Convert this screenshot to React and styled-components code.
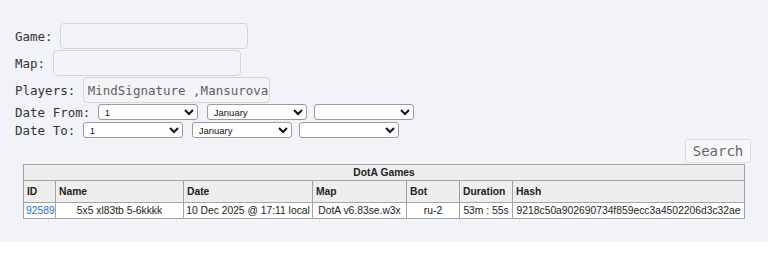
import React from 'react';
import styled, { createGlobalStyle } from 'styled-components';

const GlobalStyle = createGlobalStyle`
  html, body {
    margin: 0;
    padding: 0;
    background: #ffffff;
  }
`;

const Panel = styled.div`
  background: #f2f3f8;
  padding: 23px 17px 23px 15px;
  font-family: "DejaVu Sans Mono", "Liberation Mono", monospace;
  font-size: 12.5px;
  color: #333;
`;

const FieldRow = styled.div`
  display: flex;
  align-items: center;
  height: 26px;
  margin-bottom: ${(props) => props.gap || 0}px;
`;

const DateRow = styled.div`
  display: flex;
  align-items: center;
  height: 18px;
`;

const Label = styled.span`
  white-space: pre;
`;

const TextInput = styled.input`
  box-sizing: border-box;
  width: ${(props) => props.width || 188}px;
  height: 26px;
  margin: 0;
  padding: 0 0 0 4px;
  border: 1px solid #d4d5da;
  border-radius: 4px;
  background: #f3f4f8;
  font-family: "DejaVu Sans Mono", "Liberation Mono", monospace;
  font-size: 12.5px;
  color: #5f5f5f;
  outline: none;
`;

const Select = styled.select`
  box-sizing: border-box;
  width: 100px;
  height: 16px;
  margin: 0 ${(props) => props.space || 0}px 0 0;
  padding: 0 2px;
  border: 1px solid #9a9a9a;
  border-radius: 3px;
  background: #ffffff;
  font-family: "Liberation Sans", Arial, sans-serif;
  font-size: 9.5px;
  color: #111;
`;

const SearchBar = styled.div`
  display: flex;
  justify-content: flex-end;
`;

const SearchButton = styled.button`
  box-sizing: border-box;
  width: 66px;
  height: 24px;
  padding: 0;
  border: 1px solid #dcdde2;
  border-radius: 3px;
  background: #f7f7fa;
  font-family: "DejaVu Sans Mono", "Liberation Mono", monospace;
  font-size: 14px;
  color: #666;
`;

const Table = styled.table`
  width: 721px;
  margin: 1px 0 0 8px;
  table-layout: fixed;
  border-collapse: collapse;
  border: 1px solid #a3a3a3;
  font-family: "Liberation Sans", Arial, sans-serif;
  font-size: 10.3px;
  color: #222;
`;

const TitleCell = styled.th`
  height: 15px;
  padding: 0;
  background: #eeeeee;
  border: 1px solid #a3a3a3;
  text-align: center;
  font-weight: bold;
`;

const HeadCell = styled.th`
  height: 21px;
  padding: 0 3px;
  background: #eeeeee;
  border: 1px solid #a3a3a3;
  text-align: left;
  font-weight: bold;
  white-space: nowrap;
`;

const Cell = styled.td`
  height: 15px;
  padding: 0 2px;
  background: #ffffff;
  border: 1px solid #a3a3a3;
  text-align: ${(props) => props.align || 'center'};
  white-space: nowrap;
  overflow: hidden;
`;

const GameLink = styled.a`
  color: #1f6fd6;
  text-decoration: none;
`;

const columns = [
  { name: 'ID', width: 32 },
  { name: 'Name', width: 128 },
  { name: 'Date', width: 129 },
  { name: 'Map', width: 94 },
  { name: 'Bot', width: 53 },
  { name: 'Duration', width: 53 },
  { name: 'Hash', width: 232 }
];

const days = Array.from({ length: 31 }, (_, i) => i + 1);
const months = [
  'January', 'February', 'March', 'April', 'May', 'June',
  'July', 'August', 'September', 'October', 'November', 'December'
];

const DateSelects = () => (
  <>
    <Select space={9}>
      {days.map((d) => <option key={d}>{d}</option>)}
    </Select>
    <Select space={7}>
      {months.map((m) => <option key={m}>{m}</option>)}
    </Select>
    <Select>
      <option></option>
      <option>2025</option>
    </Select>
  </>
);

const App = () => {
  return (
    <>
      <GlobalStyle />
      <Panel>
        <FieldRow gap={1}>
          <Label>Game: </Label>
          <TextInput width={188} />
        </FieldRow>
        <FieldRow gap={1}>
          <Label>Map: </Label>
          <TextInput width={188} />
        </FieldRow>
        <FieldRow>
          <Label>Players: </Label>
          <TextInput width={187} defaultValue="MindSignature ,Mansurova" />
        </FieldRow>
        <DateRow>
          <Label>Date From: </Label>
          <DateSelects />
        </DateRow>
        <DateRow>
          <Label>Date To: </Label>
          <DateSelects />
        </DateRow>
        <SearchBar>
          <SearchButton>Search</SearchButton>
        </SearchBar>
        <Table>
          <colgroup>
            {columns.map((c) => <col key={c.name} style={{ width: c.width }} />)}
          </colgroup>
          <thead>
            <tr>
              <TitleCell colSpan={7}>DotA Games</TitleCell>
            </tr>
            <tr>
              {columns.map((c) => <HeadCell key={c.name}>{c.name}</HeadCell>)}
            </tr>
          </thead>
          <tbody>
            <tr>
              <Cell align="left"><GameLink href="#">92589</GameLink></Cell>
              <Cell>5x5 xl83tb 5-6kkkk</Cell>
              <Cell>10 Dec 2025 @ 17:11 local</Cell>
              <Cell>DotA v6.83se.w3x</Cell>
              <Cell>ru-2</Cell>
              <Cell>53m : 55s</Cell>
              <Cell>9218c50a902690734f859ecc3a4502206d3c32ae</Cell>
            </tr>
          </tbody>
        </Table>
      </Panel>
    </>
  );
};

export default App;
